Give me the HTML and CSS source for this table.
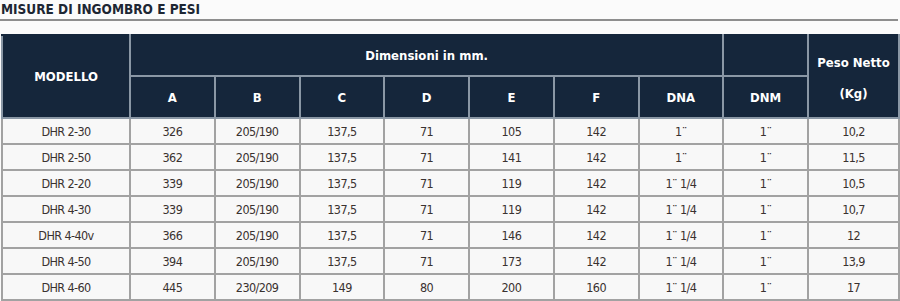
FILE: index.html
```html
<!DOCTYPE html>
<html lang="it">
<head>
<meta charset="utf-8">
<title>Misure di ingombro e pesi</title>
<link rel="stylesheet" href="styles.css">
</head>
<body>
<div class="page">
  <h2 class="title">MISURE DI INGOMBRO E PESI</h2>
  <div class="rule"></div>
  <table class="specs">
    <colgroup>
      <col class="c-model"><col class="c-dim"><col class="c-dim"><col class="c-dim"><col class="c-dim"><col class="c-dim"><col class="c-dim"><col class="c-dim"><col class="c-dim"><col class="c-peso">
    </colgroup>
    <thead>
      <tr class="h1">
        <th rowspan="2">MODELLO</th>
        <th colspan="7">Dimensioni in mm.</th>
        <th></th>
        <th rowspan="2" class="peso">Peso Netto<br>(Kg)</th>
      </tr>
      <tr class="h2">
        <th>A</th><th>B</th><th>C</th><th>D</th><th>E</th><th>F</th><th>DNA</th><th>DNM</th>
      </tr>
    </thead>
    <tbody>
      <tr><td>DHR 2-30</td><td>326</td><td>205/190</td><td>137,5</td><td>71</td><td>105</td><td>142</td><td>1¨</td><td>1¨</td><td>10,2</td></tr>
      <tr><td>DHR 2-50</td><td>362</td><td>205/190</td><td>137,5</td><td>71</td><td>141</td><td>142</td><td>1¨</td><td>1¨</td><td>11,5</td></tr>
      <tr><td>DHR 2-20</td><td>339</td><td>205/190</td><td>137,5</td><td>71</td><td>119</td><td>142</td><td>1¨ 1/4</td><td>1¨</td><td>10,5</td></tr>
      <tr><td>DHR 4-30</td><td>339</td><td>205/190</td><td>137,5</td><td>71</td><td>119</td><td>142</td><td>1¨ 1/4</td><td>1¨</td><td>10,7</td></tr>
      <tr><td>DHR 4-40v</td><td>366</td><td>205/190</td><td>137,5</td><td>71</td><td>146</td><td>142</td><td>1¨ 1/4</td><td>1¨</td><td>12</td></tr>
      <tr><td>DHR 4-50</td><td>394</td><td>205/190</td><td>137,5</td><td>71</td><td>173</td><td>142</td><td>1¨ 1/4</td><td>1¨</td><td>13,9</td></tr>
      <tr><td>DHR 4-60</td><td>445</td><td>230/209</td><td>149</td><td>80</td><td>200</td><td>160</td><td>1¨ 1/4</td><td>1¨</td><td>17</td></tr>
    </tbody>
  </table>
</div>
</body>
</html>
```

FILE: styles.css
```css
html, body {
  margin: 0;
  padding: 0;
  background: #fbfbfb;
}
.page {
  width: 898px;
  padding: 0 0 0 1px;
}
.title {
  margin: 0;
  padding: 1px 0 0 0;
  height: 17px;
  font-family: "DejaVu Sans Condensed", "DejaVu Sans", sans-serif;
  font-weight: bold;
  font-size: 13.5px;
  line-height: 16px;
  color: #1d2633;
}
.rule {
  height: 2px;
  background: #8e8e8e;
  margin: 1px 0 0 -1px;
  width: 898px;
}
.specs {
  margin-top: 13px;
  width: 897px;
  border-collapse: collapse;
  table-layout: fixed;
}
.c-model { width: 128px; }
.c-dim { width: 84.75px; }
.c-peso { width: 91px; }
.specs th {
  background: #15263b;
  color: #ffffff;
  border: 2px solid #8a97a5;
  font-family: "DejaVu Sans Condensed", "DejaVu Sans", sans-serif;
  font-weight: bold;
  font-size: 13px;
  padding: 0;
  text-align: center;
  vertical-align: middle;
}
.specs thead tr:first-child th { border-top-color: #15263b; }
.h1 { height: 41px; }
.h2 { height: 42px; }
.h2 th { padding-top: 1px; }
.specs th.peso { line-height: 31px; padding-top: 2px; }
.specs td {
  background: #f8f8f8;
  border: 2px solid #a2a2a2;
  font-family: "DejaVu Sans Condensed", sans-serif;
  font-size: 12.5px;
  letter-spacing: -0.6px;
  color: #3a3230;
  text-align: center;
  height: 23px;
  padding: 1px 0 0 0;
}
```
